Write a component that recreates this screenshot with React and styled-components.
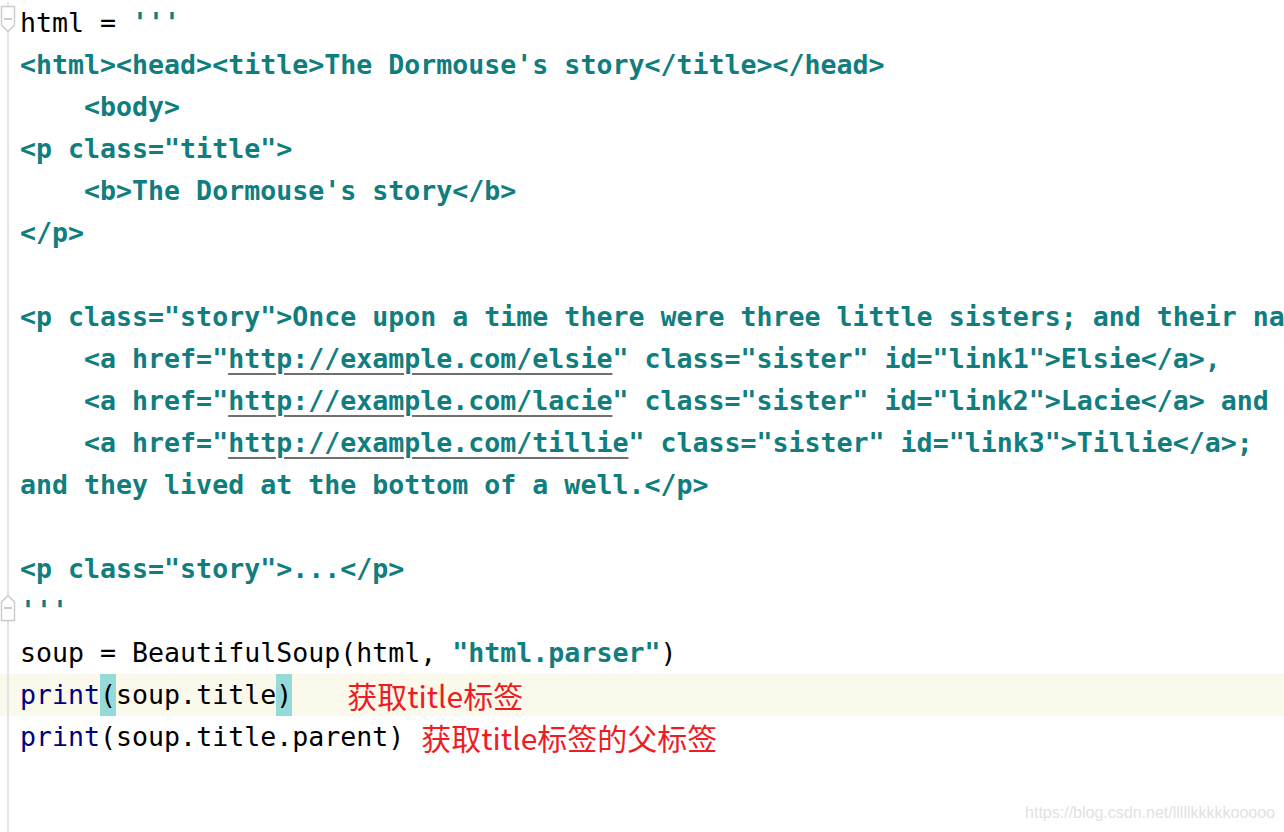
import styled, {createGlobalStyle} from 'styled-components';

const GlobalStyle = createGlobalStyle`
  html, body {
    margin: 0;
    padding: 0;
    background: #ffffff;
  }
`;

// one entry per editor line, each a list of [kind, text]
const lines = [
  {fold: 'open', parts: [['plain', 'html = '], ['str', "'''"]]},
  {parts: [['str', "<html><head><title>The Dormouse's story</title></head>"]]},
  {parts: [['str', '    <body>']]},
  {parts: [['str', '<p class="title">']]},
  {parts: [['str', "    <b>The Dormouse's story</b>"]]},
  {parts: [['str', '</p>']]},
  {parts: []},
  {
    parts: [
      ['str', '<p class="story">Once upon a time there were three little sisters; and their names were'],
    ],
  },
  {
    parts: [
      ['str', '    <a href="'],
      ['url', 'http://example.com/elsie'],
      ['str', '" class="sister" id="link1">Elsie</a>,'],
    ],
  },
  {
    parts: [
      ['str', '    <a href="'],
      ['url', 'http://example.com/lacie'],
      ['str', '" class="sister" id="link2">Lacie</a> and'],
    ],
  },
  {
    parts: [
      ['str', '    <a href="'],
      ['url', 'http://example.com/tillie'],
      ['str', '" class="sister" id="link3">Tillie</a>;'],
    ],
  },
  {parts: [['str', 'and they lived at the bottom of a well.</p>']]},
  {parts: []},
  {parts: [['str', '<p class="story">...</p>']]},
  {fold: 'close', parts: [['str', "'''"]]},
  {
    parts: [
      ['plain', 'soup = BeautifulSoup(html, '],
      ['str', '"html.parser"'],
      ['plain', ')'],
    ],
  },
  {
    current: true,
    parts: [
      ['kw', 'print'],
      ['match', '('],
      ['plain', 'soup.title'],
      ['match', ')'],
    ],
    note: '获取title标签',
    noteGap: 55,
  },
  {
    parts: [['kw', 'print'], ['plain', '(soup.title.parent)']],
    note: '获取title标签的父标签',
    noteGap: 17,
  },
];

export default function App() {
  return (
    <Editor>
      <GlobalStyle />
      {lines.map((line, i) => (
        <Line key={i} $current={line.current}>
          <Gutter>
            {line.fold && <FoldMarker dir={line.fold} />}
          </Gutter>
          <Code>
            {line.parts.map(([kind, text], j) => (
              <Token key={j} $kind={kind}>
                {text}
              </Token>
            ))}
            {line.note && <Note $gap={line.noteGap}>{line.note}</Note>}
          </Code>
        </Line>
      ))}
      <Filler>
        <Gutter />
      </Filler>
      <Watermark>https://blog.csdn.net/lllllkkkkkooooo</Watermark>
    </Editor>
  );
}

function FoldMarker({dir}) {
  const shape =
    dir === 'open'
      ? 'M1.5 1.5 H14.5 V20 L8 26.5 L1.5 20 Z'
      : 'M1.5 26.5 H14.5 V8 L8 1.5 L1.5 8 Z';
  return (
    <FoldSvg width="16" height="28" viewBox="0 0 16 28" $dir={dir}>
      <path d={shape} fill="#ffffff" stroke="#c9c9c9" strokeWidth="1.4" />
      <line x1="4" y1="14" x2="12" y2="14" stroke="#b4b4b4" strokeWidth="1.4" />
    </FoldSvg>
  );
}

const Editor = styled.div`
  position: relative;
  width: 1284px;
  height: 832px;
  overflow: hidden;
  display: flex;
  flex-direction: column;
  padding-top: 2px;
  box-sizing: border-box;
  background: #ffffff;
`;

const Line = styled.div`
  display: flex;
  height: 42px;
  flex-shrink: 0;
  background: ${p => (p.$current ? '#fbf9ec' : 'transparent')};
`;

const Filler = styled.div`
  display: flex;
  flex: 1;
`;

const Gutter = styled.div`
  width: 20px;
  flex-shrink: 0;
  display: flex;
  align-items: center;
  background: linear-gradient(
    to right,
    transparent 7px,
    #e4e4e4 7px,
    #e4e4e4 9px,
    transparent 9px
  );
`;

const FoldSvg = styled.svg`
  display: block;
  margin-top: ${p => (p.$dir === 'open' ? '-8px' : '-6px')};
`;

const Code = styled.div`
  display: flex;
  align-items: center;
  white-space: pre;
  font-family: 'DejaVu Sans Mono', 'Liberation Mono', monospace;
  font-size: 26.6px;
  line-height: 42px;
`;

const tokenColors = {
  plain: '#000000',
  str: '#107e7e',
  url: '#107e7e',
  kw: '#000080',
  match: '#000000',
};

const Token = styled.span`
  color: ${p => tokenColors[p.$kind]};
  font-weight: ${p => (p.$kind === 'str' || p.$kind === 'url' ? 700 : 400)};
  text-decoration: ${p => (p.$kind === 'url' ? 'underline' : 'none')};
  text-decoration-color: #6f6f6f;
  text-decoration-thickness: 2px;
  text-underline-offset: 5px;
  background: ${p => (p.$kind === 'match' ? '#96d9d9' : 'transparent')};
  height: 42px;
  display: inline-block;
`;

const Note = styled.span`
  margin-left: ${p => p.$gap}px;
  color: #ee1d24;
  font-family: 'Noto Sans CJK SC', 'Noto Sans', sans-serif;
  font-size: 30px;
  line-height: 42px;
  white-space: nowrap;
`;

const Watermark = styled.div`
  position: absolute;
  right: 9px;
  bottom: 10px;
  font-family: 'Liberation Sans', Arial, sans-serif;
  font-size: 16px;
  color: #e2e2e2;
`;
